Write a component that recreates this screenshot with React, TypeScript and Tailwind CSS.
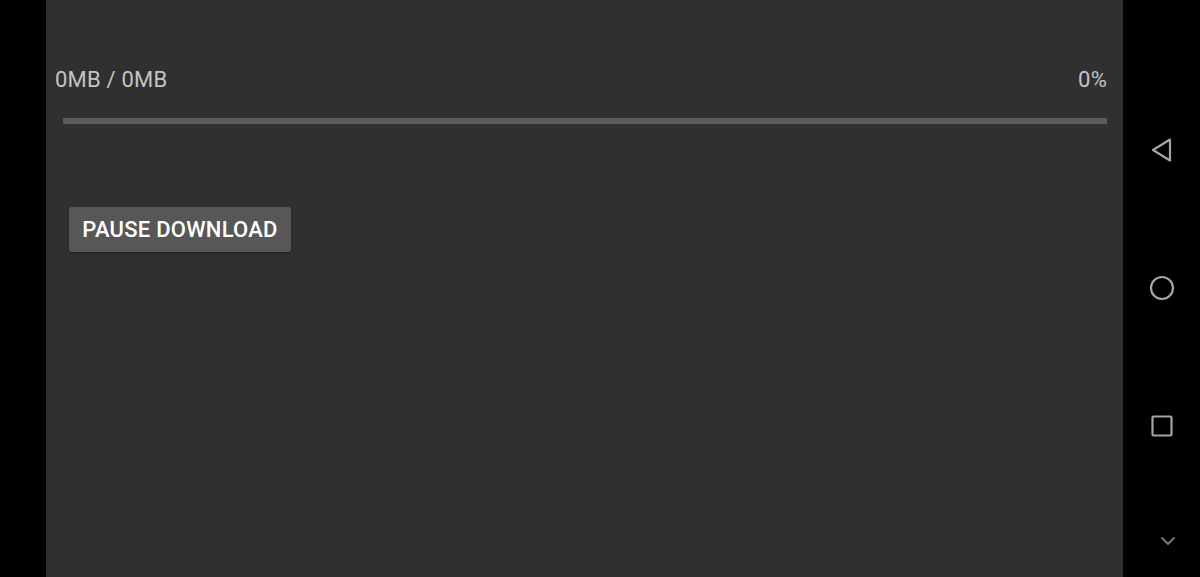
import React from "react";

// Download progress screen with an Android-style nav bar on the right
export default function App() {
  const loaded = 0;
  const total = 0;
  const percent = total > 0 ? Math.round((loaded / total) * 100) : 0;

  return (
    <div
      className="flex h-[577px] w-[1200px] overflow-hidden bg-black"
      style={{ fontFamily: "Roboto, 'Noto Sans', sans-serif" }}
    >
      <div className="w-[46px] shrink-0 bg-black" />

      <main className="flex w-[1077px] shrink-0 flex-col bg-[#303030] pl-[9px] pr-[16px]">
        <div className="mt-[66px] flex h-[28px] items-center justify-between text-[22px] leading-[28px] tracking-[0.2px] text-[#c4c4c4]">
          <span>
            {loaded}MB / {total}MB
          </span>
          <span>{percent}%</span>
        </div>

        <div className="ml-[8px] mt-[24px] h-[6px] bg-[#5c5c5c]">
          <div className="h-full bg-[#8a8a8a]" style={{ width: `${percent}%` }} />
        </div>

        <div className="ml-[14px] mt-[83px]">
          <button className="h-[45px] w-[222px] rounded-[3px] bg-[#575757] text-[22px] font-medium tracking-[0.25px] text-white shadow-[0_1px_2px_rgba(0,0,0,0.4)]">
            PAUSE DOWNLOAD
          </button>
        </div>
      </main>

      <nav className="flex w-[77px] shrink-0 flex-col items-center bg-black text-[#a5a5a5]">
        <svg className="mt-[137px]" width="26" height="26" viewBox="0 0 26 26" fill="none">
          <path
            d="M21 2.5 L4 13 L21 23.5 Z"
            stroke="currentColor"
            strokeWidth="2.2"
            strokeLinejoin="round"
          />
        </svg>
        <svg className="mt-[112px]" width="26" height="26" viewBox="0 0 26 26" fill="none">
          <circle cx="13" cy="13" r="11" stroke="currentColor" strokeWidth="2.2" />
        </svg>
        <svg className="mt-[112px]" width="26" height="26" viewBox="0 0 26 26" fill="none">
          <rect x="3.5" y="3.5" width="19" height="19" rx="1" stroke="currentColor" strokeWidth="2.2" />
        </svg>
        <svg className="ml-[12px] mt-[96px]" width="20" height="12" viewBox="0 0 20 12" fill="none">
          <path
            d="M4 3 L10 9 L16 3"
            stroke="#7a7a7a"
            strokeWidth="1.8"
            strokeLinecap="round"
            strokeLinejoin="round"
          />
        </svg>
      </nav>
    </div>
  );
}
